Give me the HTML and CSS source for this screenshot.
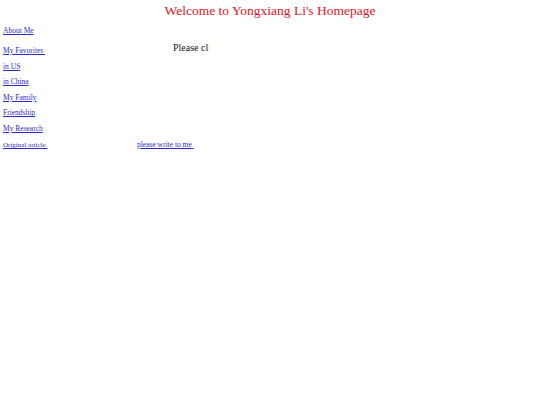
FILE: index.html
```html
<!DOCTYPE html>
<html>
<head>
<meta charset="utf-8">
<link rel="stylesheet" href="styles.css">
</head>
<body>
<h1 class="title">Welcome to Yongxiang Li's Homepage</h1>
<div class="main">
  <div class="nav">
    <a class="link first" href="#">About Me</a>
    <a class="link" href="#">My Favorites </a>
    <a class="link" href="#">in US</a>
    <a class="link" href="#">in China</a>
    <a class="link" href="#">My Family</a>
    <a class="link" href="#">Friendship</a>
    <a class="link" href="#">My Research</a>
  </div>
  <div class="notice"><span class="notice-text">Please click the links on the left</span></div>
</div>
<div class="bottom">
  <a class="small-link orig" href="#">Original article </a>
  <a class="small-link write" href="#">please write to me </a>
</div>
</body>
</html>
```
FILE: styles.css
```css
body {
  margin: 0;
  padding: 2px 3px;
  font-family: "Liberation Serif", serif;
  background: #fff;
}
.title {
  margin: 0;
  text-align: center;
  font-weight: normal;
  font-size: 13.5px;
  color: #e0141e;
  line-height: 18px;
}
.main {
  display: flex;
}
.nav {
  display: flex;
  flex-direction: column;
  width: 170px;
}
.link {
  font-size: 7.5px;
  color: #2a2acc;
  line-height: 10px;
  margin-top: 5.6px;
  white-space: pre;
}
.link.first {
  margin-top: 6px;
  margin-bottom: 4.5px;
}
.notice {
  width: 36px;
  overflow: hidden;
  white-space: nowrap;
  margin-top: 20px;
  line-height: 12px;
}
.notice-text {
  font-size: 10px;
  color: #111;
}
.bottom {
  display: flex;
  margin-top: 6px;
  line-height: 10px;
}
.small-link {
  color: #2a2acc;
  white-space: pre;
}
.orig {
  font-size: 7px;
  width: 134px;
}
.write {
  font-size: 7.5px;
}
```
